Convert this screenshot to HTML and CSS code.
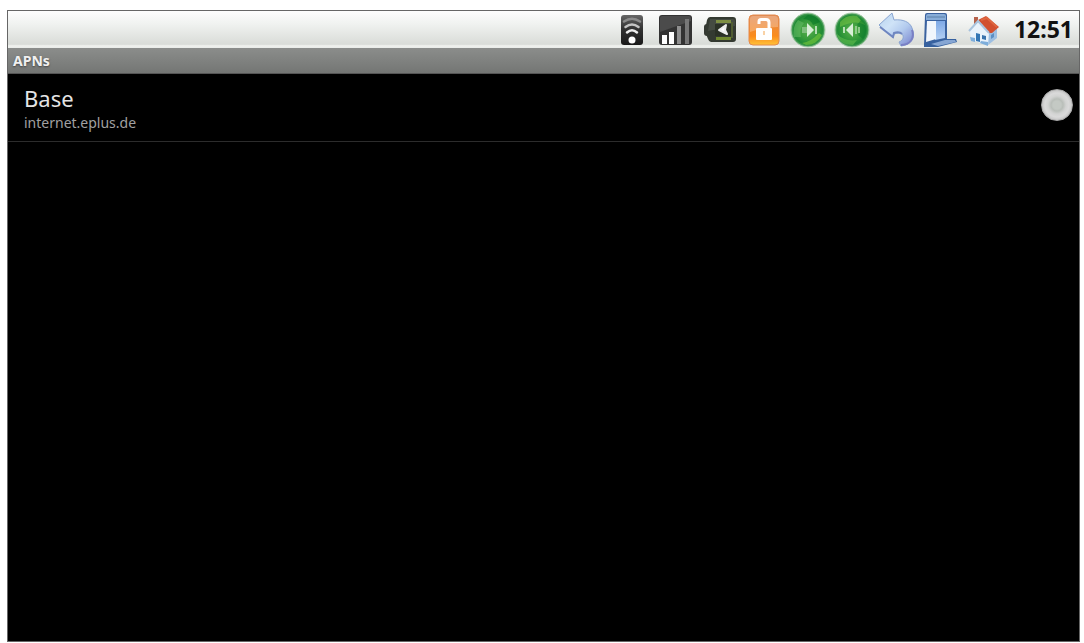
FILE: index.html
```html
<!DOCTYPE html>
<html lang="en">
<head>
    <meta charset="UTF-8">
    <meta name="viewport" content="width=device-width, initial-scale=1.0">
    <title>APNs</title>
    <link rel="stylesheet" href="styles.css">
</head>
<body>
    <div class="screen">
        <header class="status-bar">
            <svg class="icon" viewBox="0 0 36 36" role="img" aria-label="Wi-Fi">
                <defs>
                    <linearGradient id="dark" x1="0" y1="0" x2="0" y2="1">
                        <stop offset="0" stop-color="#666"/>
                        <stop offset=".45" stop-color="#333"/>
                        <stop offset="1" stop-color="#191919"/>
                    </linearGradient>
                </defs>
                <rect x="7" y="3" width="22" height="30" rx="3" fill="url(#dark)"/>
                <g fill="none" stroke-linecap="round">
                    <path d="M10 9.500Q18 4 26 9.500" stroke="#8b8b8b" stroke-width="2.500"/>
                    <path d="M11.500 15Q18 10 24.500 15" stroke="#c4c4c4" stroke-width="2.500"/>
                    <path d="M13 20.500Q18 16 23 20.500" stroke="#eee" stroke-width="2.500"/>
                </g>
                <circle cx="18" cy="28" r="3.500" fill="#fff"/>
            </svg>
            <svg class="icon" viewBox="0 0 36 36" role="img" aria-label="Signal strength">
                <rect x="1" y="3" width="33" height="30" rx="3" fill="#333"/>
                <path d="M2 20V6q0-2 2-2h27q2 0 2 2v3z" fill="#4b4b4b"/>
                <path d="M4 23h5v9H4zM11 20h5v12h-5z" fill="#fff"/>
                <path d="M19 14h4v18h-4z" fill="#8f8f8f"/>
                <path d="M27 7h4v25h-4z" fill="#777"/>
            </svg>
            <svg class="icon" viewBox="0 0 36 36" role="img" aria-label="Battery">
                <rect x="2" y="12" width="7" height="12" rx="3" fill="#343932"/>
                <path d="M8 5h23q3 0 3 3v19q0 3-3 3H9q-2 0-3-3L4 22v-9l1-5q1-3 3-3z" fill="#343a31"/>
                <path d="M8 7h23q2 0 2 2v5L6 19z" fill="#454b42"/>
                <rect x="14" y="8" width="15" height="3" fill="#7e8f43"/>
                <rect x="14" y="25" width="15" height="3" fill="#70882f"/>
                <path d="M13 12h16v12H13z" fill="#2b3126"/>
                <path d="M30 10v16" stroke="#4f5c32" stroke-width="2"/>
                <path d="M24 13l-7 5 8 4-2-4z" fill="#fff" stroke="#eee" stroke-width="2" stroke-linejoin="round"/>
            </svg>
            <button class="icon-button" aria-label="Lock">
                <svg class="icon" viewBox="0 0 36 36" aria-hidden="true">
                    <defs>
                        <linearGradient id="orange" x1="0" y1="0" x2="0" y2="1">
                            <stop offset="0" stop-color="#e08a55"/>
                            <stop offset=".35" stop-color="#ee8a38"/>
                            <stop offset=".7" stop-color="#fb8c1c"/>
                            <stop offset="1" stop-color="#ffc238"/>
                        </linearGradient>
                    </defs>
                    <rect x="3" y="3" width="30" height="30" rx="4" fill="url(#orange)" stroke="#e48a4f"/>
                    <path d="M4 20V7q0-3 3-3h22q3 0 3 3v8q-13 0-28 5z" fill="#fff" opacity=".25"/>
                    <path d="M13 12V9.500q0-2 2-2h5q3 0 3 3V18" fill="none" stroke="#fff" stroke-width="3"/>
                    <rect x="10" y="16" width="16" height="12" rx="1" fill="#fff"/>
                    <path d="M18 19v4" stroke="#f9d2a6" stroke-width="2"/>
                </svg>
            </button>
            <button class="icon-button" aria-label="Volume up">
                <svg class="icon" viewBox="0 0 36 36" aria-hidden="true">
                    <defs>
                        <radialGradient id="green">
                            <stop offset="0" stop-color="#5cb04f"/>
                            <stop offset=".55" stop-color="#369b3b"/>
                            <stop offset=".85" stop-color="#1f8a35"/>
                            <stop offset="1" stop-color="#5fa76a"/>
                        </radialGradient>
                    </defs>
                    <circle cx="18" cy="18" r="17" fill="url(#green)" stroke="#a9ccab"/>
                    <path d="M4 25Q2 15 8 8l6 3q-5 6-3 14z" fill="#6cc06a" opacity=".5"/>
                    <path d="M12 31q9-1 17-10l3 2q-5 10-16 10z" fill="#6fc23c" opacity=".7"/>
                    <path d="M18 3q8 0 12 7l-7 3q-2-6-10-6z" fill="#087827" opacity=".6"/>
                    <path d="M17 11v14l7-7z" fill="#d9efd8"/>
                    <path d="M12 15h5v6h-5z" fill="#7fbf7d"/>
                    <path d="M26 14v8" stroke="#b4dcb1" stroke-width="2"/>
                </svg>
            </button>
            <button class="icon-button" aria-label="Volume down">
                <svg class="icon" viewBox="0 0 36 36" aria-hidden="true">
                    <circle cx="18" cy="18" r="17" fill="url(#green)" stroke="#a9ccab"/>
                    <path d="M6 10Q13 2 23 4l8 9q-10-6-25 2z" fill="#74c244" opacity=".6"/>
                    <path d="M3 22q8 8 20 6l-4 5Q6 33 3 22z" fill="#62bd4f" opacity=".6"/>
                    <path d="M27 8q9 9 2 19l-5-4q4-6-1-10z" fill="#087827" opacity=".5"/>
                    <path d="M19 11v14l-7-7z" fill="#d9efd8"/>
                    <path d="M10 15v6" stroke="#b8dfb5" stroke-width="2"/>
                    <path d="M22 14v8M25 15v6" stroke="#8fcb8a" stroke-width="2"/>
                </svg>
            </button>
            <button class="icon-button" aria-label="Back">
                <svg class="icon" viewBox="0 0 36 36" aria-hidden="true">
                    <defs>
                        <linearGradient id="arrow" x1="0" y1="0" x2="1" y2="1">
                            <stop offset="0" stop-color="#b5d2ee"/>
                            <stop offset=".35" stop-color="#cfe3f7"/>
                            <stop offset=".6" stop-color="#b3cbee"/>
                            <stop offset=".85" stop-color="#8b9bd8"/>
                            <stop offset="1" stop-color="#c5cff2"/>
                        </linearGradient>
                    </defs>
                    <path d="M1 13L14 1l2 7c9-1 16 2 18 8 4 9 0 17-11 18l-2-4c5-2 5-6 3-8-2-1-5-1-8 0l-1 4z" fill="url(#arrow)" stroke="#8aa6d2" stroke-linejoin="round"/>
                    <path d="M2 15l13 10 1-4c3-1 6-1 8 1" fill="none" stroke="#6f86c0" stroke-width="2"/>
                    <path d="M34 18c3 8-2 15-11 15" fill="none" stroke="#7a80c4" stroke-width="2"/>
                </svg>
            </button>
            <button class="icon-button" aria-label="Desktop">
                <svg class="icon" viewBox="0 0 36 36" aria-hidden="true">
                    <defs>
                        <linearGradient id="display" x1="0" y1="0" x2="0" y2="1">
                            <stop offset="0" stop-color="#7ea9e6"/>
                            <stop offset="1" stop-color="#b4d0f3"/>
                        </linearGradient>
                    </defs>
                    <path d="M3 3q0-2 2-2h18q2 0 2 2v25L2 34z" fill="#3a629f"/>
                    <path d="M6 2h16q2 0 2 2v4H4V4q0-2 2-2z" fill="#88add8"/>
                    <path d="M5 5h18" stroke="#5a80a8"/>
                    <path d="M13 9h10v17l-10 2z" fill="url(#display)"/>
                    <path d="M5 9h9v18L4 30z" fill="#f1f6fc"/>
                    <path d="M2 31l21-4h11l1 3-19 5H2z" fill="#36619f"/>
                    <path d="M9 32l14-4h10l1 2-18 4z" fill="#86a6d3"/>
                </svg>
            </button>
            <button class="icon-button" aria-label="Home">
                <svg class="icon" viewBox="0 0 36 36" aria-hidden="true">
                    <path d="M21 21l10-7v12l-9 7z" fill="#9dbfe2"/>
                    <path d="M4 19l9-10 10 12-1 12-17-5z" fill="#e9f2fb"/>
                    <path d="M4 25l5 1v4l-4-1zM15 29l7 1v4l-8-3z" fill="#7eaedb"/>
                    <path d="M8 5h4v5l-4 4z" fill="#b5614a"/>
                    <path d="M12 8l8-4 13 11-7 6h-3z" fill="#d2502f"/>
                    <path d="M15 8l6-2 10 9" fill="none" stroke="#de6640" stroke-width="2"/>
                    <path d="M3 19l9-10 11 12" fill="none" stroke="#a8c3de" stroke-width="2"/>
                    <path d="M10 21l4 1v8l-4-1z" fill="#3576b4"/>
                    <path d="M16 23l4 1v4l-4-1z" fill="#3a73ad"/>
                    <path d="M25 23l3-2v4l-3 2z" fill="#5c8fc4"/>
                </svg>
            </button>
            <time class="clock">12:51</time>
        </header>
        <h1 class="title-bar">APNs</h1>
        <main class="apn-list">
            <label class="apn">
                <span class="apn-text">
                    <span class="apn-name">Base</span>
                    <span class="apn-address">internet.eplus.de</span>
                </span>
                <input class="apn-radio" type="radio" name="apn">
            </label>
        </main>
    </div>
</body>
</html>
```
FILE: styles.css
```css
* {
    margin: 0;
    padding: 0;
    box-sizing: border-box;
}

body {
    display: flex;
    min-height: 100vh;
    padding: 10px 4px 1px 7px;
    background: #fff;
    font-family: "Noto Sans", "Open Sans", sans-serif;
}

.screen {
    flex: 1;
    display: flex;
    flex-direction: column;
    border: 1px solid #666;
    background: #000;
}

.status-bar {
    display: flex;
    justify-content: flex-end;
    align-items: center;
    gap: 8px;
    padding-right: 6px;
    background: linear-gradient(#fdfdfd, #f0f2f0 35%, #d9dcd8 90%, #f0f2ef 94%, #e8ebe8);
}

.icon {
    display: block;
    width: 36px;
    height: 36px;
}

.icon-button {
    border: none;
    background: none;
    cursor: pointer;
}

.clock {
    padding-left: 4px;
    font-size: 23px;
    font-weight: 700;
    line-height: 37px;
    color: #111;
}

.title-bar {
    padding: 0 5px;
    background: linear-gradient(#8b8d8b, #747674);
    border-bottom: 1px solid #555;
    font-size: 14px;
    font-weight: 700;
    line-height: 25px;
    color: #f0f0f0;
    text-shadow: 0 1px 2px #444;
}

.apn {
    display: flex;
    justify-content: space-between;
    align-items: flex-start;
    padding: 10px 6px 8px 16px;
    border-bottom: 1px solid #2c2c2c;
    cursor: pointer;
}

.apn-text {
    display: flex;
    flex-direction: column;
}

.apn-name {
    font-size: 22px;
    line-height: 28px;
    color: #e4e4e4;
}

.apn-address {
    font-size: 14px;
    line-height: 21px;
    color: #a0a0a0;
}

.apn-radio {
    appearance: none;
    width: 32px;
    height: 32px;
    margin-top: 5px;
    border: 1px solid #aaa;
    border-radius: 50%;
    background: radial-gradient(circle, #c4c9c4 0 4px, #b9beb9 6px, #d2d3d2 9px, #dadada 12px, #c6c6c6 15px);
    cursor: pointer;
}

.apn-radio:checked {
    background: radial-gradient(circle, #6fc92f 0 4px, #b9beb9 6px, #d2d3d2 9px, #dadada 12px, #c6c6c6 15px);
}
```
